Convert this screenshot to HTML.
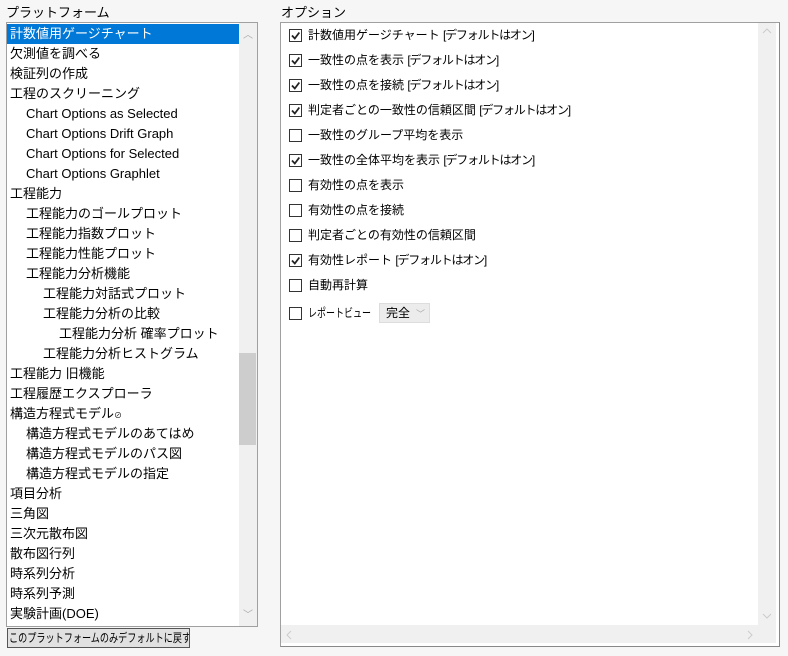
<!DOCTYPE html>
<html><head><meta charset="utf-8"><style>
*{margin:0;padding:0;box-sizing:border-box}
body{width:788px;height:656px;background:#f6f6f6;font-family:"Liberation Sans","Noto Sans CJK JP",sans-serif;color:#000;position:relative;overflow:hidden}
.abs{position:absolute}
.lbl{font-size:13px;white-space:nowrap}
.row{position:absolute;height:20px;line-height:20px;font-size:13px;white-space:nowrap}
.sel{background:#0078d7;color:#fff}
.cb{position:absolute;left:289px;width:13px;height:13px;border:1px solid #333;background:#fff}
.ct{position:absolute;left:308px;font-size:12px;white-space:nowrap;line-height:16px}
.d{letter-spacing:-1.2px}
.sx{display:inline-block;transform-origin:0 50%;width:max-content;white-space:nowrap}
</style></head><body>
<div class="abs lbl" style="left:6px;top:2px">プラットフォーム</div>
<div class="abs lbl" style="left:281px;top:2px">オプション</div>

<div class="abs" style="left:6px;top:22px;width:252px;height:605px;border:1px solid #a0a0a0;background:#fff"></div>
<div class="abs" style="left:239px;top:23px;width:18px;height:603px;background:#f0f0f0"></div>
<div class="abs" style="left:239px;top:353px;width:17px;height:92px;background:#cdcdcd"></div>
<div class="abs" style="left:243px;top:26px;font-size:10px;color:#aaa">︿</div>
<div class="abs" style="left:243px;top:606px;font-size:10px;color:#aaa">﹀</div>

<div class="row sel" style="left:7px;top:24px;width:232px;padding-left:3px">計数値用ゲージチャート</div>
<div class="row" style="left:10px;top:44px">欠測値を調べる</div>
<div class="row" style="left:10px;top:64px">検証列の作成</div>
<div class="row" style="left:10px;top:84px">工程のスクリーニング</div>
<div class="row" style="left:26px;top:104px">Chart Options as Selected</div>
<div class="row" style="left:26px;top:124px">Chart Options Drift Graph</div>
<div class="row" style="left:26px;top:144px">Chart Options for Selected</div>
<div class="row" style="left:26px;top:164px">Chart Options Graphlet</div>
<div class="row" style="left:10px;top:184px">工程能力</div>
<div class="row" style="left:26px;top:204px">工程能力のゴールプロット</div>
<div class="row" style="left:26px;top:224px">工程能力指数プロット</div>
<div class="row" style="left:26px;top:244px">工程能力性能プロット</div>
<div class="row" style="left:26px;top:264px">工程能力分析機能</div>
<div class="row" style="left:43px;top:284px">工程能力対話式プロット</div>
<div class="row" style="left:43px;top:304px">工程能力分析の比較</div>
<div class="row" style="left:59px;top:324px">工程能力分析 確率プロット</div>
<div class="row" style="left:43px;top:344px">工程能力分析ヒストグラム</div>
<div class="row" style="left:10px;top:364px">工程能力 旧機能</div>
<div class="row" style="left:10px;top:384px">工程履歴エクスプローラ</div>
<div class="row" style="left:10px;top:404px">構造方程式モデル<span style="font-size:8px">⊘</span></div>
<div class="row" style="left:26px;top:424px">構造方程式モデルのあてはめ</div>
<div class="row" style="left:26px;top:444px">構造方程式モデルのパス図</div>
<div class="row" style="left:26px;top:464px">構造方程式モデルの指定</div>
<div class="row" style="left:10px;top:484px">項目分析</div>
<div class="row" style="left:10px;top:504px">三角図</div>
<div class="row" style="left:10px;top:524px">三次元散布図</div>
<div class="row" style="left:10px;top:544px">散布図行列</div>
<div class="row" style="left:10px;top:564px">時系列分析</div>
<div class="row" style="left:10px;top:584px">時系列予測</div>
<div class="row" style="left:10px;top:604px">実験計画(DOE)</div>

<div class="abs" style="left:7px;top:628px;width:183px;height:20px;border:1px solid #555;background:#e1e1e1;font-size:12px;line-height:18px;padding-left:1px;overflow:hidden"><span class="sx" style="transform:scaleX(0.76)">このプラットフォームのみデフォルトに戻す</span></div>

<div class="abs" style="left:280px;top:22px;width:500px;height:625px;border:1px solid #a0a0a0;border-right-color:#888;border-bottom-color:#888;background:#fff"></div>
<div class="abs" style="left:758px;top:23px;width:18px;height:620px;background:#f0f0f0"></div>
<div class="abs" style="left:281px;top:625px;width:495px;height:18px;background:#f0f0f0"></div>

<div class="cb" style="top:29px"></div><div class="ct" style="top:27px">計数値用ゲージチャート <span class="d">[デフォルトはオン]</span></div>
<div class="cb" style="top:54px"></div><div class="ct" style="top:52px">一致性の点を表示 <span class="d">[デフォルトはオン]</span></div>
<div class="cb" style="top:79px"></div><div class="ct" style="top:77px">一致性の点を接続 <span class="d">[デフォルトはオン]</span></div>
<div class="cb" style="top:104px"></div><div class="ct" style="top:102px">判定者ごとの一致性の信頼区間 <span class="d">[デフォルトはオン]</span></div>
<div class="cb" style="top:129px"></div><div class="ct" style="top:127px">一致性のグループ平均を表示</div>
<div class="cb" style="top:154px"></div><div class="ct" style="top:152px">一致性の全体平均を表示 <span class="d">[デフォルトはオン]</span></div>
<div class="cb" style="top:179px"></div><div class="ct" style="top:177px">有効性の点を表示</div>
<div class="cb" style="top:204px"></div><div class="ct" style="top:202px">有効性の点を接続</div>
<div class="cb" style="top:229px"></div><div class="ct" style="top:227px">判定者ごとの有効性の信頼区間</div>
<div class="cb" style="top:254px"></div><div class="ct" style="top:252px">有効性レポート <span class="d">[デフォルトはオン]</span></div>
<div class="cb" style="top:279px"></div><div class="ct" style="top:277px">自動再計算</div>
<div class="cb" style="top:307px"></div><div class="ct" style="top:305px"><span class="sx" style="transform:scaleX(0.75)">レポートビュー</span></div>
<div class="abs" style="left:379px;top:303px;width:51px;height:20px;border:1px solid #ddd;background:#ececec;font-size:12px;line-height:18px;padding-left:6px">完全<span style="color:#aaa;font-size:9px;margin-left:6px">﹀</span></div>

<svg class="abs" style="left:0;top:0" width="788" height="656">
<g fill="none" stroke="#222" stroke-width="1.8">
<path d="M292 35.5l2.8 3 4.5-6"/><path d="M292 60.5l2.8 3 4.5-6"/><path d="M292 85.5l2.8 3 4.5-6"/><path d="M292 110.5l2.8 3 4.5-6"/><path d="M292 160.5l2.8 3 4.5-6"/><path d="M292 260.5l2.8 3 4.5-6"/>
</g>
<g fill="none" stroke="#ccc" stroke-width="1">
<path d="M763 33l4-4 4 4"/><path d="M763 614l4 4 4-4"/><path d="M291 631l-4 4 4 4"/><path d="M748 631l4 4-4 4"/>
</g>
</svg>
</body></html>
